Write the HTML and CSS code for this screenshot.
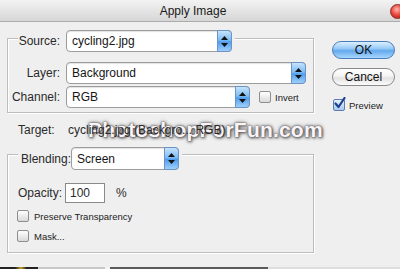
FILE: index.html
```html
<!DOCTYPE html>
<html>
<head>
<meta charset="utf-8">
<link rel="stylesheet" href="styles.css">
</head>
<body>
<div class="win">
  <div class="titlebar"><span class="title">Apply Image</span><span class="close"></span></div>
  <div class="main">
    <div class="left">
      <div class="group g1">
        <div class="legend">
          <span class="lbl lbl-src">Source:</span>
          <div class="popup w-src"><span class="ptext">cycling2.jpg</span><span class="arr"><svg width="7" height="11" viewBox="0 0 7 11"><polygon points="0,4 3.5,0 7,4" /><polygon points="0,7 3.5,11 7,7" /></svg></span></div>
        </div>
        <div class="row row1">
          <span class="lbl">Layer:</span>
          <div class="popup w-layer"><span class="ptext">Background</span><span class="arr"><svg width="7" height="11" viewBox="0 0 7 11"><polygon points="0,4 3.5,0 7,4" /><polygon points="0,7 3.5,11 7,7" /></svg></span></div>
        </div>
        <div class="row row2">
          <span class="lbl">Channel:</span>
          <div class="popup w-chan"><span class="ptext">RGB</span><span class="arr"><svg width="7" height="11" viewBox="0 0 7 11"><polygon points="0,4 3.5,0 7,4" /><polygon points="0,7 3.5,11 7,7" /></svg></span></div>
          <span class="chk invert"><span class="box"></span><span class="small">Invert</span></span>
        </div>
      </div>
      <div class="target"><span class="tlbl">Target:</span><span class="tval">cycling2.jpg (Backgro... RGB)</span></div>
      <div class="group g2">
        <div class="legend legend2">
          <span class="lbl-blend">Blending:</span>
          <div class="popup w-blend"><span class="ptext">Screen</span><span class="arr"><svg width="7" height="11" viewBox="0 0 7 11"><polygon points="0,4 3.5,0 7,4" /><polygon points="0,7 3.5,11 7,7" /></svg></span></div>
        </div>
        <div class="opacity"><span class="olbl">Opacity:</span><span class="input">100</span><span class="pct">%</span></div>
        <div class="chkrow cr1"><span class="box"></span><span class="small">Preserve Transparency</span></div>
        <div class="chkrow cr2"><span class="box"></span><span class="small">Mask...</span></div>
      </div>
    </div>
    <div class="right">
      <div class="btn ok">OK</div>
      <div class="btn cancel">Cancel</div>
      <div class="preview"><span class="box checked"><svg width="13" height="13" viewBox="0 0 13 13"><path d="M2.5 6.5 L5.5 10 L11.5 1" fill="none" stroke="#1c3f8f" stroke-width="2.2" stroke-linecap="round" stroke-linejoin="round"/></svg></span><span class="small">Preview</span></div>
    </div>
  </div>
  <div class="strip"><span class="s1"></span><span class="s2"></span><span class="s3"></span><span class="s4"></span><span class="s5"></span></div>
  <div class="watermark">PhotoshopForFun.com</div>
</div>
</body>
</html>
```
FILE: styles.css
```css
html, body { margin: 0; padding: 0; }
body {
  width: 400px;
  height: 269px;
  overflow: hidden;
  background: #efefef;
  font-family: "Liberation Sans", Arial, sans-serif;
  font-size: 12px;
  color: #151515;
}
.win {
  position: relative;
  width: 400px;
  height: 269px;
  display: flex;
  flex-direction: column;
  overflow: hidden;
}
.titlebar {
  position: relative;
  height: 21px;
  flex: none;
  border-bottom: 1px solid #acacac;
  background: linear-gradient(#f3f3f3, #d6d6d6);
  display: flex;
  align-items: center;
  justify-content: center;
  padding-right: 14px;
}
.title { font-size: 12px; color: #1a1a1a; }
.close {
  position: absolute;
  right: -5px;
  top: 4px;
  width: 13px;
  height: 13px;
  border-radius: 50%;
  background: radial-gradient(circle at 45% 35%, #ffb6ae 0%, #e8463c 50%, #a8140f 100%);
  border: 1px solid #8c2a24;
}
.main {
  flex: 1;
  display: flex;
  padding-left: 7px;
}
.left {
  width: 307px;
  flex: none;
  padding-top: 16px;
  display: flex;
  flex-direction: column;
}
.right {
  width: 63px;
  margin-left: 18px;
  padding-top: 19px;
  display: flex;
  flex-direction: column;
}
.group {
  box-sizing: border-box;
  border: 1px solid #bdbdbd;
  box-shadow: inset 1px 1px 0 #fff, 1px 1px 0 #fff;
  display: flex;
  flex-direction: column;
}
.g1 { height: 75px; }
.g2 { height: 99px; margin-top: 15px; }
.legend {
  display: flex;
  align-items: center;
  align-self: flex-start;
  background: #efefef;
  margin-left: 10px;
  padding-right: 3px;
  height: 22px;
  margin-top: -9px;
}
.legend2 { height: 23px; margin-top: -8px; }
.lbl {
  width: 52px;
  flex: none;
  text-align: right;
  margin-right: 6px;
  color: #2a2a2a;
}
.lbl.lbl-src { width: 42px; }
.lbl-blend { width: 53px; padding-left: 3px; box-sizing: border-box; flex: none; color: #2a2a2a; }
.row { display: flex; align-items: center; height: 22px; }
.row1 { margin-top: 10px; }
.row2 { margin-top: 2px; }
.popup {
  box-sizing: border-box;
  height: 22px;
  border: 1px solid #9d9d9d;
  border-radius: 4px;
  background: #fff;
  display: flex;
  align-items: center;
  padding-left: 5px;
  box-shadow: inset 0 1px 1px rgba(0,0,0,0.12);
}
.legend2 .popup { height: 23px; }
.ptext { flex: 1; }
.arr {
  align-self: stretch;
  margin: -1px -1px -1px 0;
  width: 15px;
  box-sizing: border-box;
  border: 1px solid #6b93c6;
  border-radius: 0 4px 4px 0;
  background: linear-gradient(#c6e3fc 0%, #7ebbf4 45%, #4f9cec 55%, #9dd0fa 100%);
  display: flex;
  align-items: center;
  justify-content: center;
}
.arr svg { fill: #111; }
.w-src { width: 166px; }
.w-layer { width: 240px; }
.w-chan { width: 184px; }
.w-blend { width: 108px; }
.chk { display: flex; align-items: center; }
.invert { margin-left: 9px; }
.box {
  box-sizing: border-box;
  width: 12px;
  height: 12px;
  border: 1px solid #8e8e8e;
  border-radius: 2px;
  background: linear-gradient(#ffffff, #d9d9d9);
  flex: none;
  position: relative;
}
.small { font-size: 9.5px; color: #222; margin-left: 4px; }
.target {
  margin-top: 8px;
  height: 18px;
  display: flex;
  align-items: center;
  padding-left: 11px;
  color: #2a2a2a;
}
.tlbl { width: 50px; flex: none; }
.tval { position: relative; z-index: 2; }
.opacity {
  margin-top: 13px;
  height: 20px;
  display: flex;
  align-items: center;
  padding-left: 10px;
  color: #2a2a2a;
}
.olbl { width: 47px; flex: none; }
.input {
  box-sizing: border-box;
  width: 40px;
  height: 20px;
  border: 1px solid #8a8a8a;
  background: #fff;
  padding-left: 4px;
  display: flex;
  align-items: center;
}
.pct { margin-left: 11px; }
.chkrow { display: flex; align-items: center; height: 12px; padding-left: 9px; }
.chkrow .small { margin-left: 5px; }
.cr1 { margin-top: 7px; }
.cr2 { margin-top: 8px; }
.btn {
  box-sizing: border-box;
  height: 18px;
  border-radius: 9px;
  display: flex;
  align-items: center;
  justify-content: center;
  font-size: 12px;
  color: #111;
}
.ok {
  border: 1px solid #4a7dbd;
  background: linear-gradient(#dcefff 0%, #99cbf7 40%, #63a9ef 55%, #a8d7fc 100%);
}
.cancel {
  margin-top: 9px;
  border: 1px solid #8a8a8a;
  background: linear-gradient(#ffffff 0%, #f4f4f4 45%, #e2e2e2 55%, #fbfbfb 100%);
}
.preview {
  margin-top: 13px;
  margin-left: 1px;
  display: flex;
  align-items: center;
  height: 12px;
}
.box.checked {
  border-color: #5d7fb0;
  background: linear-gradient(#e6f1fc, #a9c9ee);
}
.box.checked svg { position: absolute; left: -1px; top: -3px; }
.preview .small { margin-left: 4px; }
.strip { height: 2px; flex: none; display: flex; }
.strip span { display: block; height: 2px; }
.s1 { width: 38px; background: linear-gradient(90deg, #222 0%, #222 40%, #c9a227 55%, #222 70%); }
.s2 { width: 67px; background: #c8c8c8; }
.s3 { width: 5px; background: #f4f4f4; }
.s4 { width: 158px; background: #5a5a5a; }
.s5 { flex: 1; background: #dedede; }
.watermark {
  position: absolute;
  z-index: 1;
  left: 88px;
  top: 117px;
  font-family: "Liberation Sans", Arial, sans-serif;
  font-weight: bold;
  font-size: 21px;
  line-height: 26px;
  letter-spacing: 0.2px;
  color: #faf4f8;
  text-shadow: 0 0 2px #4a4a4a, 0 0 4px #6a6a6a, 1px 1px 3px #555;
  white-space: nowrap;
}
```
